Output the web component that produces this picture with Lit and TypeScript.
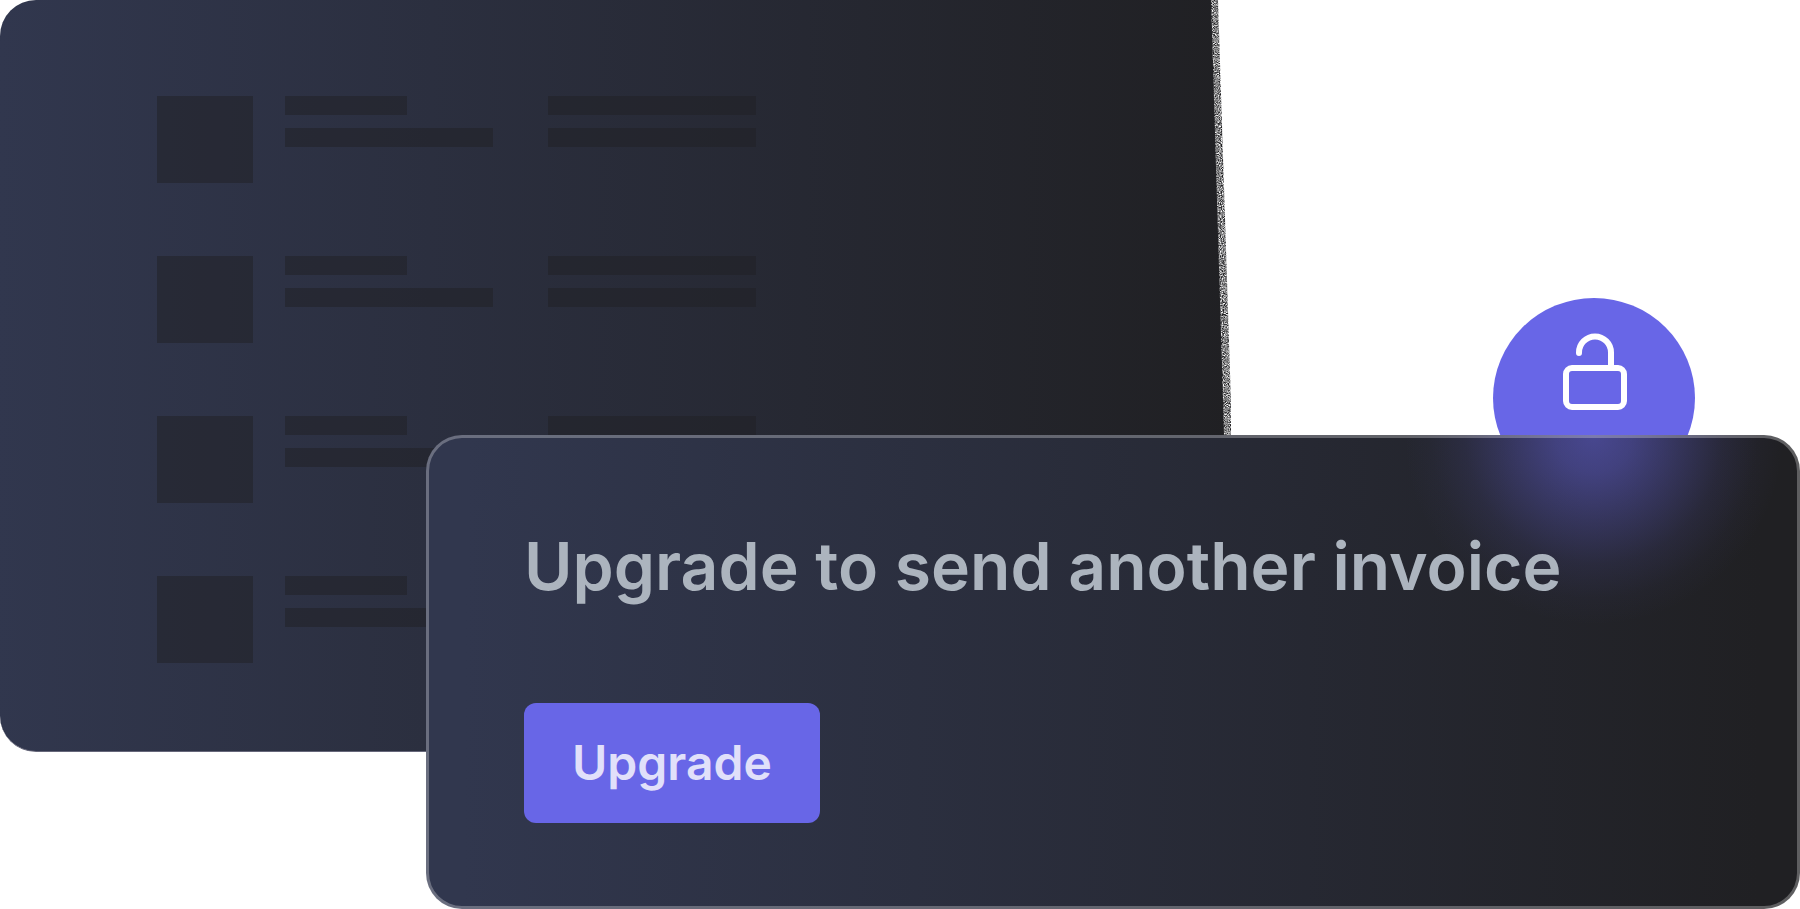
import { LitElement, html, css } from "lit";
import { customElement } from "lit/decorators.js";

const INVOICE_ROWS = [0, 1, 2, 3];

@customElement("invoice-panel")
class InvoicePanel extends LitElement {
  static styles = css`
    :host {
      display: block;
    }
    .panel {
      box-sizing: border-box;
      display: flex;
      flex-direction: column;
      gap: 73px;
      padding: 96px 0 88px 157px;
      border-bottom: 1px solid #66677a;
      border-radius: 36px 0 0 36px;
      background: linear-gradient(90.5deg, #31374e, #202023);
      clip-path: polygon(0 0, calc(100% - 20px) 0, calc(100% - 7px) 435px, 100% 100%, 0 100%);
    }
    .row {
      display: flex;
      height: 87px;
    }
    .thumb,
    .bar {
      background: rgba(32, 32, 35, 0.5);
    }
    .thumb {
      width: 96px;
      margin-right: 32px;
    }
    .lines {
      display: flex;
      flex-direction: column;
      gap: 13px;
      width: 208px;
      margin-right: 55px;
    }
    .bar {
      height: 19px;
    }
    .short {
      width: 122px;
    }
  `;

  render() {
    return html`
      <div class="panel" aria-hidden="true">
        ${INVOICE_ROWS.map(
          () => html`
            <div class="row">
              <div class="thumb"></div>
              <div class="lines">
                <div class="bar short"></div>
                <div class="bar"></div>
              </div>
              <div class="lines">
                <div class="bar"></div>
                <div class="bar"></div>
              </div>
            </div>
          `
        )}
      </div>
    `;
  }
}

@customElement("app-root")
class AppRoot extends LitElement {
  static styles = css`
    :host {
      display: block;
      min-height: 100vh;
      background: #fff;
      font-family: Inter, "Liberation Sans", sans-serif;
    }
    .scene {
      display: grid;
      grid-template-columns: 426fr 805fr 569fr;
      grid-template-rows: 435px auto;
    }
    .back {
      grid-column: 1 / 3;
      grid-row: 1 / 3;
      align-self: start;
    }
    .grain {
      grid-column: 2;
      grid-row: 1;
      justify-self: end;
      display: block;
    }
    .badge {
      grid-column: 2 / 4;
      grid-row: 1;
      justify-self: end;
      align-self: end;
      display: flex;
      justify-content: center;
      box-sizing: border-box;
      width: 202px;
      height: 200px;
      margin: 0 105px -63px 0;
      padding: 35px 0 0 2px;
      border-radius: 50%;
      background: #6866e7;
    }
    .card {
      grid-column: 2 / 4;
      grid-row: 2;
      position: relative;
      display: flex;
      flex-direction: column;
      align-items: flex-start;
      gap: 93px;
      padding: 84px 95px 83px;
      border: 3px solid rgba(255, 255, 255, 0.28);
      border-radius: 36px;
      background:
        radial-gradient(
          circle 190px at calc(100% - 206px) 0,
          rgba(104, 102, 231, 0.54) 0%,
          rgba(104, 102, 231, 0.45) 20%,
          rgba(104, 102, 231, 0.27) 45%,
          rgba(104, 102, 231, 0.11) 68%,
          rgba(104, 102, 231, 0.03) 86%,
          rgba(104, 102, 231, 0) 100%
        ) border-box,
        linear-gradient(90.5deg, #31374e 3%, #202023 97%) border-box;
    }
    .title {
      margin: 0;
      color: #acb4be;
      font-size: 66px;
      font-weight: 600;
      line-height: 88px;
    }
    .action {
      padding: 30px 48px;
      border: 0;
      border-radius: 12px;
      background: #6866e7;
      color: #e1e0fa;
      font-family: inherit;
      font-size: 48px;
      font-weight: 600;
      line-height: 60px;
      cursor: pointer;
    }
  `;

  render() {
    return html`
      <main class="scene">
        <invoice-panel class="back"></invoice-panel>
        <svg class="grain" width="24" height="435" viewBox="0 0 24 435" aria-hidden="true">
          <filter id="grain" x="0" y="0" width="24" height="435" filterUnits="userSpaceOnUse" color-interpolation-filters="sRGB">
            <feTurbulence type="fractalNoise" baseFrequency="0.9" numOctaves="2" seed="4" />
            <feColorMatrix values="0 0 0 0 0.12  0 0 0 0 0.12  0 0 0 0 0.13  2 0 0 0 -0.45" />
            <feComposite in2="SourceGraphic" operator="in" />
          </filter>
          <polygon points="3,0 11,0 25,435 16,435" fill="#202024" filter="url(#grain)" />
        </svg>
        <div class="badge">
          <svg width="70" height="82" viewBox="0 0 70 82" fill="none" stroke="#fff" stroke-width="6" aria-hidden="true">
            <rect x="6" y="35" width="58" height="39" rx="6" />
            <path d="M19 20v-.5a16 16 0 0 1 32 0V35" stroke-linecap="round" />
          </svg>
        </div>
        <section class="card" aria-labelledby="upgrade-title">
          <h1 class="title" id="upgrade-title">Upgrade to send another invoice</h1>
          <button class="action" type="button">Upgrade</button>
        </section>
      </main>
    `;
  }
}
